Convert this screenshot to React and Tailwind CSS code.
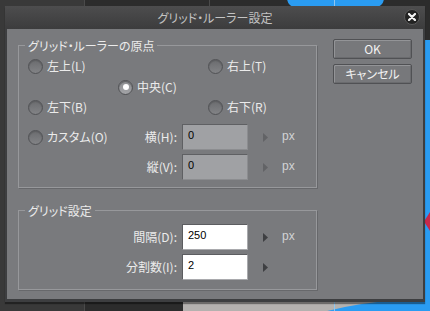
import React from 'react';

const jp = "font-['Noto_Sans_CJK_JP','Noto_Sans',sans-serif] [font-feature-settings:'palt']";

const Radio = ({ label, checked }) => (
  <div className="flex items-center gap-[4px]">
    <span
      className={`w-[15px] h-[15px] rounded-full border border-[#515255] flex items-center justify-center shadow-[inset_0_1px_1px_#5c5d60] ${
        checked ? 'bg-gradient-to-b from-[#8f9093] to-[#a2a3a6]' : 'bg-gradient-to-b from-[#6b6c6f] to-[#828386]'
      }`}
    >
      {checked && <span className="w-[6px] h-[6px] rounded-full bg-white" />}
    </span>
    <span className="text-[12px] leading-none text-[#ebebeb]">{label}</span>
  </div>
);

const Arrow = ({ dark }) => (
  <svg width="5" height="9" viewBox="0 0 5 9" className="shrink-0">
    <polygon points="0,0 5,4.5 0,9" fill={dark ? '#3e3f42' : '#626366'} />
  </svg>
);

const Field = ({ label, value, enabled, unit }) => (
  <div className="flex items-center h-[26px]">
    <div className="w-[90px]" />
    <span className="w-[59px] text-right text-[12px] leading-none text-[#ebebeb]">{label}</span>
    <div
      className={`ml-[5px] w-[66px] h-[26px] flex items-center pl-[5px] pb-[3px] border ${
        enabled
          ? 'bg-white border-t-[#5c5d60] border-l-[#5c5d60] border-b-[#a9aaad] border-r-[#a9aaad]'
          : 'bg-[#a0a1a4] border-t-[#5f6063] border-l-[#5f6063] border-b-[#8c8d90] border-r-[#8c8d90]'
      }`}
    >
      <span className="font-['Liberation_Sans',sans-serif] text-[11px] leading-none text-black">{value}</span>
    </div>
    <div className="ml-[15px]">
      <Arrow dark={enabled} />
    </div>
    {unit && (
      <span className="ml-[14px] font-['Liberation_Sans',sans-serif] text-[12px] leading-none text-[#d2d3d5] pb-[2px]">
        {unit}
      </span>
    )}
  </div>
);

const Group = ({ title, className, children }) => (
  <div className={`relative border border-[#97989b] shadow-[1px_1px_0_#67686b] ${className}`}>
    <span className="absolute left-[6px] -top-[8px] px-[3px] bg-[#797a7d] text-[12px] leading-[15px] text-[#ebebeb]">
      {title}
    </span>
    {children}
  </div>
);

const Button = ({ children, className }) => (
  <button
    className={`w-[79px] h-[20px] rounded-[2px] border border-[#505154] bg-[#77787b] shadow-[inset_1px_1px_0_#939497,inset_-1px_-1px_0_#6a6b6e] text-[12px] leading-none text-[#f2f2f2] flex items-center justify-center ${className}`}
  >
    {children}
  </button>
);

export default function App() {
  return (
    <div className={`relative w-[430px] h-[311px] overflow-hidden bg-[#2c2c2c] pt-[6px] pl-[5px] ${jp}`}>
      {/* canvas behind the dialog */}
      <div className="absolute left-0 top-0 w-[84px] h-full bg-[#393939]" />
      <div className="absolute left-[84px] top-0 w-px h-full bg-[#4a4a4a]" />
      <div className="absolute left-[209px] top-0 w-px h-[10px] bg-[#4a4a4a]" />
      <div className="absolute left-[287px] -top-[2px] w-[97px] h-[10px] rounded-b-[24px] bg-[#2a9cf2]" />
      <div className="absolute left-[334px] top-0 w-px h-[8px] bg-[#8fc6f0]" />
      <div className="absolute right-0 top-[40px] w-[8px] h-[280px] bg-[#2a9cf2]" />
      <div className="absolute right-0 top-[212px] w-[6px] h-[19px] bg-[#c8284a] [clip-path:polygon(0_50%,100%_0,100%_100%)]" />
      <div className="absolute left-[183px] top-[300px] w-[260px] h-[12px] bg-[#b4b1af]" />
      <div className="absolute left-[232px] top-[298px] w-[420px] h-[160px] rounded-[50%] bg-[#2a9cf2]" />
      <div className="absolute left-[334px] top-[300px] w-px h-[12px] bg-[#8fc6f0]" />

      {/* dialog */}
      <div className="relative z-10 w-[420px] h-[296px] bg-[#3d3e40] shadow-[0_2px_1px_rgba(0,0,0,0.4)] flex flex-col">
        <div className="relative h-[23px] shrink-0 bg-gradient-to-b from-[#4d4d4e] to-[#3c3c3d] flex items-center justify-center">
          <span className="text-[12px] leading-none text-[#c3c3c3]">グリッド・ルーラー設定</span>
          <div className="absolute right-[5px] top-[3px] w-[16px] h-[16px] rounded-full bg-[#232323] border border-[#5a5a5a] flex items-center justify-center">
            <svg width="8" height="8" viewBox="0 0 8 8">
              <path d="M1 1 L7 7 M7 1 L1 7" stroke="#f4f4f4" strokeWidth="2.2" strokeLinecap="round" />
            </svg>
          </div>
        </div>

        <div className="mx-[2px] mb-[3px] flex-1 bg-[#797a7d] flex">
          <div className="ml-[11px] mt-[16px] w-[299px]">
            <Group title="グリッド・ルーラーの原点" className="pt-[10px] pb-[7px]">
              <div className="flex items-center h-[20px] pl-[9px]">
                <div className="w-[180px]">
                  <Radio label="左上(L)" />
                </div>
                <Radio label="右上(T)" />
              </div>
              <div className="flex items-center h-[20px] mt-[1px] pl-[99px]">
                <Radio label="中央(C)" checked />
              </div>
              <div className="flex items-center h-[20px] pl-[9px]">
                <div className="w-[180px]">
                  <Radio label="左下(B)" />
                </div>
                <Radio label="右下(R)" />
              </div>
              <div className="relative mt-[7px] pl-[9px]">
                <div className="absolute left-[9px] top-0 h-[26px] flex items-center">
                  <Radio label="カスタム(O)" />
                </div>
                <Field label="横(H):" value="0" unit="px" />
              </div>
              <div className="mt-[4px] pl-[9px]">
                <Field label="縦(V):" value="0" unit="px" />
              </div>
            </Group>

            <Group title="グリッド設定" className="mt-[22px] pt-[13px] pb-[9px]">
              <div className="pl-[9px]">
                <Field label="間隔(D):" value="250" unit="px" enabled />
              </div>
              <div className="mt-[4px] pl-[9px]">
                <Field label="分割数(I):" value="2" enabled />
              </div>
            </Group>
          </div>

          <div className="ml-[16px] mt-[10px] flex flex-col gap-[5px]">
            <Button>OK</Button>
            <Button>キャンセル</Button>
          </div>
        </div>
      </div>
    </div>
  );
}
